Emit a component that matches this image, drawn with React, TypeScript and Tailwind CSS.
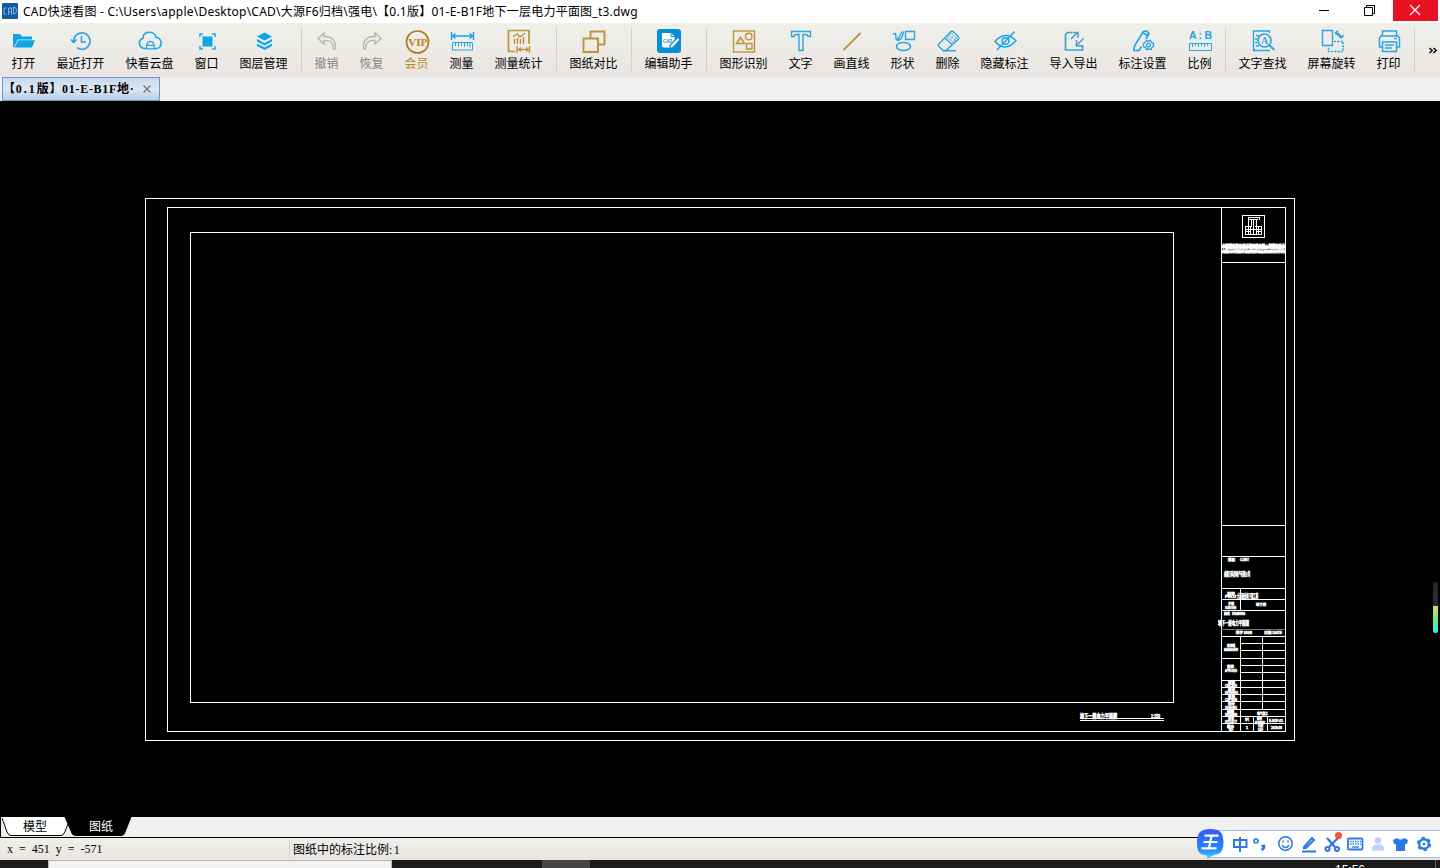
import React from 'react';

interface ToolProps {
    label: string;
    icon: React.ReactNode;
    tone?: 'normal' | 'disabled' | 'gold';
}

const BLUE = '#2ba5e0';
const GOLD = '#bf9438';

function Icon({ children, color = BLUE }: { children: React.ReactNode; color?: string }) {
    return (
        <svg width="24" height="24" viewBox="0 0 24 24" fill="none" stroke={color} strokeWidth="1.4" className="overflow-visible">
            {children}
        </svg>
    );
}

function Tool({ label, icon, tone = 'normal' }: ToolProps) {
    const width = label.length === 2 ? 'w-[45px]' : label.length === 3 ? 'w-[57px]' : 'w-[69px]';
    const color = tone === 'gold' ? 'text-[#b98a26]' : tone === 'disabled' ? 'text-[#858585]' : 'text-black';
    return (
        <div className={`flex shrink-0 flex-col items-center pt-1.5 ${width}`}>
            {icon}
            <span className={`mt-1 text-[12px] leading-[14px] whitespace-nowrap ${color}`}>{label}</span>
        </div>
    );
}

function Separator() {
    return (
        <div className="flex w-1.5 shrink-0 justify-center pt-[5px]">
            <div className="h-11 w-px bg-[#d0d0d0]" />
        </div>
    );
}

const icons = {
    open: (
        <Icon>
            <path d="M1 18V5h7l2 2.500h10v3H6L2 18z" fill="#0ea5ea" stroke="none" />
            <path d="M6.500 11.300H23L20 18.500H2.500z" fill="#0ea5ea" stroke="none" />
        </Icon>
    ),
    recent: (
        <Icon>
            <path d="M4.700 12.500A8.200 8.200 0 1 1 8 18.700M2 10.500l2.700 3 3-3M12.500 7v6H17" strokeWidth="1.6" />
        </Icon>
    ),
    cloud: (
        <Icon color="#1ba9ea">
            <path d="M8 19.500H6.500A5.300 5.300 0 0 1 5 9.200C5.200 1.500 16.500 1.500 18 8.200c6.500.8 6.800 10 1 11.300h-3" strokeWidth="1.6" />
            <path d="M8.300 19.800c0-10 8-10 8 0zM8.500 16.300h7.600" strokeWidth="1.3" />
        </Icon>
    ),
    window: (
        <Icon color="#1ba9ea">
            <path d="M5 8V5h3M17 5h3v3M20 17v3h-3M8 20H5v-3" strokeWidth="1.500" />
            <rect x="7.500" y="7.500" width="10" height="10" fill="#0ea5ea" stroke="none" />
        </Icon>
    ),
    layers: (
        <Icon>
            <g fill="#0ea5ea" stroke="none">
                <path d="M12.500 3.500 20 7.500l-7.500 4-7.500-4z" />
                <path d="m5 10 7.500 4L20 10v2.500l-7.500 4-7.500-4z" />
                <path d="m5 14.500 7.500 4 7.500-4V17l-7.500 4L5 17z" />
            </g>
        </Icon>
    ),
    undo: (
        <Icon color="#b5b5b5">
            <path d="M9 4 3 9.500 9 15v-3.500c6-.8 9 1.500 9.500 8.500h1.500c2-7-2.500-13-11-12.500z" />
        </Icon>
    ),
    redo: (
        <Icon color="#b5b5b5">
            <path d="m15 4 6 5.500-6 5.500v-3.500c-6-.8-9 1.500-9.500 8.500H4C2 13 6.500 7 15 7.500z" />
        </Icon>
    ),
    vip: (
        <Icon color="#b37b22">
            <circle cx="12.500" cy="13" r="11" strokeWidth="1.700" />
            <text x="12.700" y="16.700" textAnchor="middle" textLength="19" lengthAdjust="spacingAndGlyphs" fontFamily="Liberation Serif" fontWeight="bold" fontSize="11" fill="#b98416" stroke="none">VIP</text>
        </Icon>
    ),
    measure: (
        <Icon>
            <path d="M1.500 3v8M23.500 3v8M3 7h19M5.500 4.500 2.500 7l3 2.500M19.500 4.500l3 2.500-3 2.500" stroke="#16a5ea" />
            <path d="M2.500 13.500h20v7.500h-20zM5.500 14v3M8.500 14v4M11.500 14v3M14.500 14v4M17.500 14v3M20 14v4" strokeWidth="1" />
        </Icon>
    ),
    stats: (
        <Icon color={GOLD}>
            <path d="M8 22.500H1.500v-21h20.500V15" strokeWidth="1.700" />
            <path d="m6 8 4-3 3 3 5-4M7.500 10v5M10.500 9v6M13.500 10v5M16.500 8v7M10 17v7M22.500 17v7M12 20.500h9M14 18.500l-2.500 2 2.500 2M19 18.500l2.500 2-2.500 2" />
        </Icon>
    ),
    compare: (
        <Icon color={GOLD}>
            <path d="M8.500 9V2.500h14v13H17M1.500 9.500H16v13.500H1.500z" strokeWidth="1.900" />
        </Icon>
    ),
    assistant: (
        <Icon>
            <rect x="0" y="0" width="24" height="24" rx="3" fill="#078ed8" stroke="none" />
            <path d="M5 4h9l3.500 3.500V18.500H7q-2 0-2-2z" fill="white" stroke="none" />
            <path d="M14 4v3.500h3.500" stroke="#078ed8" strokeWidth="1" />
            <text x="6" y="14" textLength="9" lengthAdjust="spacingAndGlyphs" fontFamily="Liberation Sans" fontSize="5.500" fontWeight="bold" fill="#078ed8" stroke="none">CAD</text>
            <path d="m13.500 18.500 8-8" stroke="#078ed8" strokeWidth="5" />
            <path d="m14 18 7.500-8" stroke="white" strokeWidth="2.200" />
        </Icon>
    ),
    recognize: (
        <Icon color={GOLD}>
            <rect x="1.500" y="2" width="21" height="21" />
            <path d="m8.500 8.500-4 6h8z" strokeWidth="1.600" />
            <circle cx="16.700" cy="7.500" r="3.300" />
            <path d="M14.500 14.500h5.500v5.500h-5.500z" />
        </Icon>
    ),
    text: (
        <Icon>
            <path d="M2.500 2.500h19v5H19q0-2-3-2h-2v16h-4v-16H8q-3 0-3 2H2.500z" />
        </Icon>
    ),
    line: (
        <Icon color={GOLD}><path d="M3.500 21 20.500 4" strokeWidth="1.800" /></Icon>
    ),
    shape: (
        <Icon>
            <path d="M14.500 2.500h9v8h-9zM2 5.500c4-3 2.500 1.500 3 4.500q1 2 2.500-.5l3-6q1.500-1.500 2 .5l-2.500 6-3 1.500V8" />
            <ellipse cx="12.500" cy="17.500" rx="7" ry="4" strokeWidth="1.600" />
        </Icon>
    ),
    erase: (
        <Icon>
            <path d="M2.500 15.500 15 2.500q1-1 2 0l5.500 5.500q.8.800 0 2L10 21.500H7l-4.500-4.500q-.7-.8 0-1.500zM9 9l7.500 7" />
            <path d="m11 8 7 6M13 6l7 6M15 4l6 6M15 4.500 12 8M18 6l-4 5M20.500 8 17 13" strokeWidth=".6" />
            <path d="M7 21.700h13" stroke="#16a5ea" />
        </Icon>
    ),
    hide: (
        <Icon color="#16a5ea">
            <path d="M2 12.500Q12.500 1 23 11.500 12.500 24 2 12.500zM21.500 2.500 4 21" strokeWidth="1.500" />
            <circle cx="12.500" cy="12" r="3.300" strokeWidth="1.500" />
        </Icon>
    ),
    transfer: (
        <Icon color="#42a2cf">
            <path d="M10 3.500H5.500L3.500 5.500v15.500h17V16" strokeWidth="1.700" />
            <path d="m9 10 6-6M10.500 3.500H16V9M21.500 9.500l-7 7M14.500 11v6H20" strokeWidth="1.500" />
        </Icon>
    ),
    settings: (
        <Icon>
            <path d="M2.500 21.500 4 16 12 3q3.500-2.500 6 1.500L15 10M10.500 17.500 8 21.500zM12 4l5.500 3M2.500 21.500H9" strokeWidth="1.600" stroke="#16a5ea" />
            <path d="m15.500 11.500 2 .5 2-.5 1 2 2 1v3l-1.500 1-1 2-2.500-.5-2 .5-1-2-2-1v-3l1.500-1z" />
            <circle cx="17.500" cy="16" r="1.900" />
        </Icon>
    ),
    ratio: (
        <Icon>
            <g fontFamily="Liberation Sans" fontWeight="bold" fontSize="10.500" fill="#16a5ea" stroke="none">
                <text x="1" y="10">A</text>
                <text x="10.500" y="10">:</text>
                <text x="16.500" y="10">B</text>
            </g>
            <path d="M1.500 14.500h22v7h-22zM4.500 15v3M7.500 15v2M10.500 15v3M13.500 15v2M16.500 15v3M19.500 15v2" strokeWidth="1" />
        </Icon>
    ),
    find: (
        <Icon>
            <path d="M18.500 4V2H2.500v19.500H19M2.500 21.500l1-2M5 6.500h3M4 10h2M4 13.500h2M5 17h3" />
            <circle cx="13.500" cy="11.500" r="6.500" strokeWidth="1.700" />
            <path d="m18 16 5.500 5" strokeWidth="2" />
            <text x="13.500" y="15" textAnchor="middle" fontFamily="Liberation Serif" fontWeight="bold" fontSize="10" fill={BLUE} stroke="none">A</text>
        </Icon>
    ),
    rotate: (
        <Icon>
            <path d="M2.500 1.500h10v15h-10z" />
            <path d="M14 12.500h9v10H8.500V18" strokeDasharray="2 1.200" strokeWidth="1.600" />
            <path d="M16 4c3 0 4 1.500 5 4.500M18 1.500 15.500 4 18 6.500M18.500 7l3 2 2-3" strokeWidth="1.600" />
        </Icon>
    ),
    print: (
        <Icon>
            <path d="M5.500 7V2h14v5M5.500 18H2.500V9l1.500-2h17l1.500 2v9h-3M5.500 13h14v9.500h-14zM8 16h9M8 19h7" strokeWidth="1.500" />
            <path d="M17 9.500h3" />
        </Icon>
    ),
};

function TitleBar() {
    return (
        <div className="flex h-[23px] items-start bg-white">
            <svg className="mt-[3px] ml-0.5 shrink-0" width="16" height="16" viewBox="0 0 16 16">
                <rect width="16" height="16" rx="1" fill="#1259a5" />
                <path d="M4.500 5H2v6h2.500M6.500 12V5h3v7M6.500 9h3M11.500 4q3.500.500 3 4t-3 3z" fill="none" stroke="#7fb4e2" />
            </svg>
            <span className="ml-[5px] text-[12px] leading-[23px] tracking-[0.23px] whitespace-pre font-['Noto_Sans','Noto_Sans_CJK_SC',sans-serif]">
                CAD快速看图 - C:\Users\apple\Desktop\CAD\大源F6归档\强电\【0.1版】01-E-B1F地下一层电力平面图_t3.dwg
            </span>
            <div className="ml-auto flex h-[21px]">
                <svg width="92" height="21" viewBox="0 0 92 21" fill="none" stroke="black">
                    <path d="M18 10.500h10M63.500 7.500h8v8h-8zM65.500 7V5.500h8v8H72" />
                </svg>
                <svg className="mr-0.5 bg-[#e81123]" width="45" height="21" viewBox="0 0 45 21" stroke="white" strokeWidth="1.200">
                    <path d="m17 5 10 10M27 5 17 15" />
                </svg>
            </div>
        </div>
    );
}

function Toolbar() {
    return (
        <div className="flex h-[54px] bg-linear-to-b from-[#f0f0eb] to-[#eae5e2] pl-px">
            <Tool label="打开" icon={icons.open} />
            <Tool label="最近打开" icon={icons.recent} />
            <Tool label="快看云盘" icon={icons.cloud} />
            <Tool label="窗口" icon={icons.window} />
            <Tool label="图层管理" icon={icons.layers} />
            <Separator />
            <Tool label="撤销" icon={icons.undo} tone="disabled" />
            <Tool label="恢复" icon={icons.redo} tone="disabled" />
            <Tool label="会员" icon={icons.vip} tone="gold" />
            <Tool label="测量" icon={icons.measure} />
            <Tool label="测量统计" icon={icons.stats} />
            <Separator />
            <Tool label="图纸对比" icon={icons.compare} />
            <Separator />
            <Tool label="编辑助手" icon={icons.assistant} />
            <Separator />
            <Tool label="图形识别" icon={icons.recognize} />
            <Tool label="文字" icon={icons.text} />
            <Tool label="画直线" icon={icons.line} />
            <Tool label="形状" icon={icons.shape} />
            <Tool label="删除" icon={icons.erase} />
            <Tool label="隐藏标注" icon={icons.hide} />
            <Tool label="导入导出" icon={icons.transfer} />
            <Tool label="标注设置" icon={icons.settings} />
            <Tool label="比例" icon={icons.ratio} />
            <Separator />
            <Tool label="文字查找" icon={icons.find} />
            <Tool label="屏幕旋转" icon={icons.rotate} />
            <Tool label="打印" icon={icons.print} />
            <Separator />
            <svg className="mt-6 ml-3" width="9" height="7" viewBox="0 0 9 7" fill="none" stroke="black" strokeWidth="1.400">
                <path d="m.5 1 2.700 2.500L.5 6M4.500 1l2.700 2.500L4.500 6" />
            </svg>
        </div>
    );
}

// x, y (baseline), width, text of the small print in the title block
const notes: [number, number, number, string][] = [
    [1228, 561, 7, '建设'],
    [1240, 561, 9, 'CLIENT'],
    [1224, 575.5, 26, '成都万科房地产有限公司'],
    [1227, 594.5, 8, '项目'],
    [1225, 598, 11, 'PROJ'],
    [1237, 597.5, 21, '大源商业地下室工程'],
    [1228, 605, 6, '子项'],
    [1225, 608.5, 11, 'SUBITEM'],
    [1256, 606, 10, '地下室'],
    [1224, 615, 6, '图名'],
    [1232, 615, 13, 'DRAWING'],
    [1218, 625, 31, '地下一层电力平面图'],
    [1236, 634, 16, '签字 SIGN'],
    [1264, 634, 18, '日期 DATE'],
    [1227, 647, 8, '项目经理'],
    [1224, 651, 14, 'MANAGER'],
    [1227, 668, 7, '审定'],
    [1225, 672, 12, 'APPROVED'],
    [1228, 684, 7, '审核'],
    [1225, 687, 12, 'CHECKED'],
    [1228, 691, 7, '校对'],
    [1225, 694, 13, 'REVIEWED'],
    [1228, 698, 7, '负责'],
    [1225, 701, 12, 'CAPTAIN'],
    [1228, 705, 7, '设计'],
    [1225, 709, 12, 'DESIGNED'],
    [1227, 713, 7, '制图'],
    [1225, 716, 12, 'DRAWN'],
    [1257, 714.5, 11, '电气施工'],
    [1228, 720, 6, '专业'],
    [1225, 723, 12, 'SPECIALTY'],
    [1245, 721, 4, '电气'],
    [1257, 720, 5, '图号'],
    [1255, 723.500, 10, 'NUMBER'],
    [1269, 721.500, 14, 'E-B1F-01'],
    [1227, 727.500, 7, '版本'],
    [1229, 731, 4, 'NO'],
    [1246, 728.500, 2, '1'],
    [1258, 727, 5, '日期'],
    [1258, 730.500, 5, 'DATE'],
    [1271, 728.500, 11, '2019.08'],
];

function Drawing() {
    return (
        <svg className="block" width="1440" height="716" viewBox="0 101 1440 716" fill="none" stroke="white">
            <g shapeRendering="crispEdges">
                <rect x="145.500" y="198.500" width="1149" height="542" />
                <rect x="167.500" y="207.500" width="1118" height="524" />
                <rect x="190.500" y="232.500" width="983" height="470" />
                <path d="M1221.500 207v524M1221 262.500h64M1221 525.500h64M1221 556.500h64M1221 588.500h64M1221 599.500h64M1221 610.500h64M1221 636.500h64M1221 658.500h64M1221 680.500h64M1221 687.500h64M1221 694.500h64M1221 701.500h64M1221 709.500h64M1221 716.500h64M1221 723.500h64" />
                <path d="M1221 629.500h64" stroke="#777" />
                <path d="M1240 643.500h45M1240 650.500h45M1240 665.500h45M1240 672.500h45M1240.500 588v22M1240.500 636v95M1262.500 636v73M1253.500 716v15M1267.500 716v15" />
                <path d="M1080 718.500h84M1080 720.500h84" />
                <rect x="1242.500" y="215.500" width="22" height="22" />
                <path d="M1248 217.500h12M1248.500 217v9M1251.500 219v8M1253.500 219v15M1256.500 219v7M1259.500 217v3M1249 219.500h9M1245 226.500h7M1255 226.500h7M1245 229.500h17M1245 231.500h5M1257 231.500h5M1245 234.500h17M1245.500 226v9M1248.500 226v8M1250.500 226v9M1256.500 226v9M1258.500 226v8M1261.500 226v9" />
                <path d="M1221 247h64M1221 251.500h64" strokeWidth="1.500" />
            </g>
            <g fill="white" stroke="white" strokeWidth=".6" fontFamily="Liberation Sans, Noto Sans CJK SC, sans-serif">
                <g strokeWidth=".9">
                    <text x="1222" y="248" fontSize="4.500" textLength="63" lengthAdjust="spacingAndGlyphs">中国建筑西南设计研究院有限公司建筑设计</text>
                    <text x="1222" y="253" fontSize="3" textLength="63" lengthAdjust="spacingAndGlyphs">CHINA SOUTHWEST ARCHITECTURAL DESIGN INSTITUTE</text>
                </g>
                <g>
                    {notes.map(([x, y, width, text]) => (
                        <text key={`${x}-${y}`} x={x} y={y} textLength={width} lengthAdjust="spacingAndGlyphs" fontSize={width > 20 ? 5.5 : 3.5}>
                            {text}
                        </text>
                    ))}
                </g>
                <text x="1080" y="717.500" fontSize="6" textLength="37" lengthAdjust="spacingAndGlyphs">地下一层电力平面图</text>
                <text x="1151" y="717.500" fontSize="5" textLength="9" lengthAdjust="spacingAndGlyphs">1:150</text>
            </g>
        </svg>
    );
}

function SheetTabs() {
    return (
        <div className="relative h-[21px] border-b border-black bg-[#f0f0f0]">
            <svg className="absolute top-0 left-0" width="136" height="20" viewBox="0 0 136 20">
                <path d="M0 0v20" stroke="black" strokeWidth="2" />
                <path d="M2 0 7 15q1.500 3.500 4 3.500h50q2.500 0 4-4L68 7V0z" fill="white" />
                <path d="M2 1 7 15q1.500 3.500 4 3.500h50q2.500 0 4-4L68 7" fill="none" stroke="black" />
                <path d="M64.500 0h67l-6 15q-1 4-5 4H76q-4 0-5-4z" fill="black" />
            </svg>
            <div className="relative flex pt-px text-[12px] leading-[19px]">
                <span className="ml-[23px] w-[66px]">模型</span>
                <span className="text-white">图纸</span>
            </div>
        </div>
    );
}

function InputMethodBar() {
    return (
        <div className="absolute top-[829px] left-[1197px] h-[29px] w-[243px]">
            <div className="mt-px ml-3 h-7 border-y border-[#9dbce9] bg-white" />
            <svg className="absolute top-0 left-0" width="243" height="30" viewBox="0 0 243 30" fill="none" stroke="#2b78e4" strokeWidth="2">
                <defs>
                    <linearGradient id="ime" x1="0" y1="0" x2="0" y2="1">
                        <stop offset="0" stopColor="#3558f3" />
                        <stop offset=".7" stopColor="#2688ff" />
                        <stop offset="1" stopColor="#4dd9ff" />
                    </linearGradient>
                </defs>
                <path d="M7 1Q13-1 20 1q6 1 6.500 12 0 10-5.500 12-4 1-6 2l-5 3q1-3-1-4-7 0-8-5-2-7 0-14 1-5 6-6z" fill="url(#ime)" stroke="none" />
                <path d="M7.500 6.700h14M6.500 13h14M4.500 19.300h15M14.500 7l-2.500 12" stroke="white" strokeWidth="2.200" />
                <path d="M43 8v15M37 11h12.500v7H37z" />
                <circle cx="59" cy="12" r="2" strokeWidth="1.600" />
                <path d="M64.500 17h2.500q.5 2.500-2.500 4" strokeWidth="2.600" />
                <circle cx="88.500" cy="14.500" r="6.700" strokeWidth="1.600" />
                <path d="M85 16q3.500 5 7 0M86 11.500v2M91 11.500v2" strokeWidth="1.500" />
                <path d="m107 18 8-9 2 2-8 8h-2zM105 22.500h14" />
                <path d="m130 9 8 9M141 9l-9 9" strokeWidth="2.200" />
                <circle cx="130.500" cy="20" r="2" />
                <circle cx="140" cy="20" r="2" />
                <circle cx="141.500" cy="6.500" r="3.500" fill="#fa5432" stroke="none" />
                <rect x="151" y="9.500" width="14.500" height="11" rx="1" strokeWidth="1.800" />
                <path d="M153 12.500h11M153 15h11" strokeDasharray="1.500 1" strokeWidth="1.500" />
                <path d="M155 18h7" strokeWidth="1.400" />
                <circle cx="181" cy="11.500" r="3.300" fill="#bdd2f5" stroke="none" />
                <path d="M175 21q0-5 6-5t6 5z" fill="#bdd2f5" stroke="#bdd2f5" strokeWidth="1" />
                <path d="m200 9-4 2 1 4h2v7h9v-7h2l1-4-4-2q-3.500 3-7 0z" fill="#2b78e4" stroke="none" />
                <circle cx="227" cy="15" r="4.800" strokeWidth="2.400" />
                <circle cx="227" cy="15" r="6.500" strokeWidth="1.500" strokeDasharray="3.400 3.400" />
                <circle cx="227" cy="15" r="1.300" fill="#2b78e4" stroke="none" />
            </svg>
        </div>
    );
}

export default function App() {
    return (
        <div className="relative h-[868px] w-[1440px] overflow-hidden bg-[#f0f0f0] text-black font-['Liberation_Sans','Noto_Sans_CJK_SC',sans-serif]">
            <TitleBar />
            <Toolbar />
            <div className="flex h-6 pl-0.5">
                <div className="flex h-6 w-[158px] items-center border border-[#6f96c9] bg-linear-to-b from-[#c8d9ec] via-[#dce7f3] to-[#b8cde6] text-[12px] font-bold">
                    <span className="w-[134px] pt-px leading-[21px] tracking-[0.7px] whitespace-nowrap font-['Liberation_Serif','Noto_Sans_CJK_SC',serif]">
                        【<span className="tracking-[2px]">0.1</span>版】01-E-B1F地·
                    </span>
                    <svg className="ml-1.5 shrink-0" width="8" height="8" viewBox="0 0 8 8" stroke="#707070" strokeWidth="1.200">
                        <path d="m.5.5 7 7M7.500.5l-7 7" />
                    </svg>
                </div>
            </div>
            <div className="h-[716px] bg-black">
                <Drawing />
            </div>
            <SheetTabs />
            <div className="flex h-[22px] items-center bg-linear-to-b from-[#f0f0eb] to-[#eae5e2] text-[12px] font-['Liberation_Serif','Noto_Sans_CJK_SC',serif]">
                <span className="w-[289px] pl-[7px] [word-spacing:3px] whitespace-pre">x = 451 y = -571</span>
                <span className="h-[18px] w-px bg-[#d6d6d6]" />
                <span className="pt-0.5 pl-[3px] leading-4">图纸中的标注比例<span className="tracking-[1.500px]">:1</span></span>
            </div>
            <div className="flex h-2 overflow-hidden bg-[#1b1b1b]">
                <div className="ml-12 h-2 w-[344px] border border-b-0 border-[#b9b9b9] bg-[#f2f2f2]" />
                <div className="ml-[150px] h-2 w-12 bg-[#454545]" />
                <span className="mt-[3px] ml-[745px] text-[12px] leading-[14px] text-white">15:56</span>
                <div className="ml-auto mr-1 h-2 w-px bg-[#666]" />
            </div>
            <div className="absolute top-[582px] left-[1433px] flex h-[51px] w-[5px] flex-col overflow-hidden rounded-sm bg-[#292a35]">
                <div className="mt-6 flex-1 bg-linear-to-b from-[#d3d84d] via-[#62ef86] to-[#24edf5]" />
            </div>
            <InputMethodBar />
        </div>
    );
}
